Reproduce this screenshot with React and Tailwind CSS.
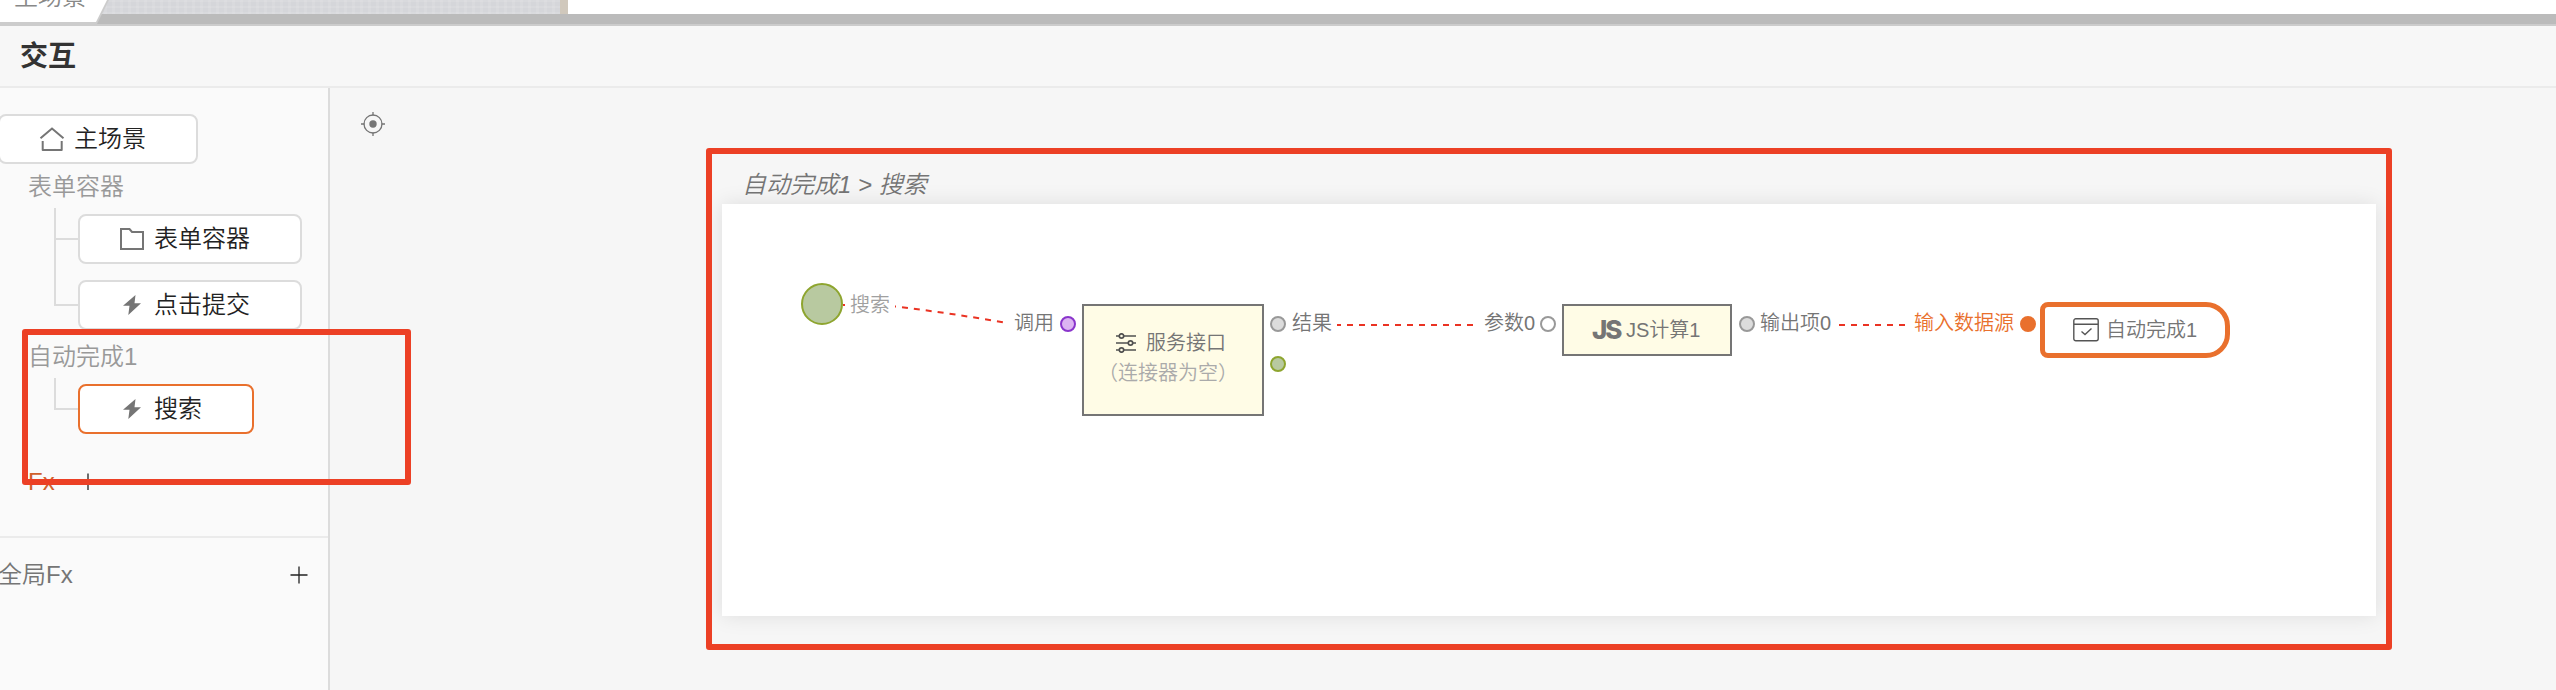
import React from "react";

const PlusIcon = ({ className = "" }) => (
  <svg className={className} width="18" height="18" viewBox="0 0 18 18" fill="none" stroke="currentColor" strokeWidth="1.300">
    <path d="M9 0.500v17M0.500 9h17" />
  </svg>
);

const HomeIcon = () => (
  <svg width="26" height="26" viewBox="0 0 26 26" fill="none" stroke="#757575" strokeWidth="2">
    <path d="M1.500 12.300 13 2.600l11.500 9.700" />
    <path d="M3.700 15v9h19v-9" strokeLinejoin="round" />
  </svg>
);

const FolderIcon = () => (
  <svg width="24" height="22" viewBox="0 0 24 22" fill="none" stroke="#757575" strokeWidth="2">
    <path d="M1 1h8.500l2.500 3h11v17H1z" />
  </svg>
);

const BoltIcon = () => (
  <svg width="18" height="20" viewBox="0 0 18 20" fill="#757575">
    <path d="M12.500 0 0 10.700h6.500L5.300 20 18 8.300h-6.500z" />
  </svg>
);

const TargetIcon = () => (
  <svg width="24" height="24" viewBox="0 0 24 24" fill="none" stroke="#757575" strokeWidth="1.300">
    <circle cx="12" cy="12" r="9" />
    <circle cx="12" cy="12" r="3.700" fill="#757575" stroke="none" />
    <path d="M12 0v3.500M12 20.500V24M0 12h3.500M20.500 12H24" />
  </svg>
);

const SlidersIcon = () => (
  <svg width="20" height="20" viewBox="0 0 20 20" fill="#fffce6" stroke="#505050" strokeWidth="1.700">
    <path d="M0 3h20M0 10h20M0 17h20" />
    <circle cx="5.500" cy="3" r="2.200" />
    <circle cx="14.500" cy="10" r="2.200" />
    <circle cx="5.500" cy="17" r="2.200" />
  </svg>
);

const CheckPanelIcon = () => (
  <svg width="26" height="24" viewBox="0 0 26 24" fill="none" stroke="#555" strokeWidth="1.400">
    <rect x=".8" y=".8" width="24.400" height="22" rx="2" />
    <path d="M1 6.300h24M8.500 13.500l3.500 3 6.500-6" />
  </svg>
);

function TreeItem({ icon, label, className = "", box = "border-[#dcdcdc] w-[224px]" }) {
  return (
    <div className={`flex items-center ${className}`}>
      <div className={`flex h-[50px] items-center rounded-lg border-2 bg-white ${box}`}>
        <span className="ml-10 flex w-6 justify-center">{icon}</span>
        <span className="ml-2.5 text-[#222]">{label}</span>
      </div>
    </div>
  );
}

function Sidebar() {
  return (
    <aside className="flex w-[330px] shrink-0 flex-col border-r-2 border-[#dcdcdc] bg-[#fafafa] text-2xl leading-6">
      <div className="h-[402px] shrink-0 overflow-hidden pt-[26px]">
        <div className="-ml-0.5 flex h-[50px] w-[200px] items-center rounded-lg border-2 border-[#dcdcdc] bg-white">
          <span className="ml-[39px]"><HomeIcon /></span>
          <span className="ml-[9px] text-[#222]">主场景</span>
        </div>
        <div className="mt-[11px] ml-7 text-[#999]">表单容器</div>
        <div className="mt-[9px] ml-[54px] flex h-[122px]">
          <div className="flex h-[98px] w-6 flex-col border-b-2 border-l-2 border-[#dcdcdc]">
            <div className="h-8 border-b-2 border-[#dcdcdc]" />
          </div>
          <div className="flex flex-col gap-4 pt-1.5">
            <TreeItem icon={<FolderIcon />} label="表单容器" />
            <TreeItem icon={<BoltIcon />} label="点击提交" />
          </div>
        </div>
        <div className="mt-[15px] ml-7 text-[#999]">自动完成1</div>
        <div className="mt-[9px] ml-[54px] flex h-14">
          <div className="h-8 w-6 border-b-2 border-l-2 border-[#dcdcdc]" />
          <TreeItem className="pt-1.5" icon={<BoltIcon />} label="搜索" box="w-[176px] border-[#e9702d]" />
        </div>
        <div className="mt-9 ml-7 flex items-center text-[#d0602c]">
          <span className="w-[51px]">Fx</span>
          <PlusIcon className="text-[#222]" />
        </div>
      </div>
      <div className="mt-[46px] flex h-[76px] items-center justify-between border-t-2 border-[#ebebeb] pr-5">
        <span className="-ml-0.5 text-[#757575]">全局Fx</span>
        <PlusIcon className="text-[#222]" />
      </div>
    </aside>
  );
}

function Port({ x, y, className }) {
  return <div className={`absolute size-4 rounded-full border-2 ${className}`} style={{ left: x - 8, top: y - 8 }} />;
}

function Label({ x, children, className = "text-[#757575]", y = 109 }) {
  return <div className={`absolute whitespace-nowrap leading-5 ${className}`} style={{ left: x, top: y }}>{children}</div>;
}

function Diagram() {
  return (
    <div className="relative h-[412px] w-[1654px] bg-white text-xl leading-5 text-[#757575] shadow-[0_0_20px_rgba(0,0,0,0.1)]">
      <svg className="absolute inset-0" width="1654" height="412" fill="none" stroke="#ea3323" strokeWidth="2" strokeDasharray="6 6">
        <path d="M121 101h2" strokeDasharray="none" />
        <path d="M173 102.500h1" strokeDasharray="none" />
        <path d="M180 103.200Q230 109.500 281 118.300" />
        <path d="M615 121h4" strokeDasharray="none" />
        <path d="M625 121h128" />
        <path d="M1117 121h66" />
      </svg>
      <div className="absolute top-[79px] left-[79px] size-[42px] rounded-full border-2 border-[#8ea52f] bg-[#b8c9a0]" />
      <Label x={128} y={91} className="text-[#a0a0a0]">搜索</Label>
      <Label x={292}>调用</Label>
      <Port x={346} y={120} className="border-[#8a35cc] bg-[#dcb4f2]" />
      <div className="absolute top-[100px] left-[360px] h-[112px] w-[182px] border-2 border-[#757575] bg-[#fffce6] pt-[27px]">
        <div className="flex items-center gap-2.5 pl-8">
          <SlidersIcon />
          <span>服务接口</span>
        </div>
        <div className="mt-2.5 -ml-2.5 whitespace-nowrap text-center text-[#aaa]">（连接器为空）</div>
      </div>
      <Port x={556} y={120} className="border-[#999] bg-[#dcdcdc]" />
      <Port x={556} y={160} className="border-[#8ea52f] bg-[#b8c9a0]" />
      <Label x={570}>结果</Label>
      <Label x={762}>参数0</Label>
      <Port x={826} y={120} className="border-[#999] bg-white" />
      <div className="absolute top-[100px] left-[840px] flex h-[52px] w-[170px] items-center border-2 border-[#757575] bg-[#fffce6] pl-7">
        <span className="w-8 text-[26px] leading-5 font-extrabold tracking-[-2px] [font-family:Inter,sans-serif]">JS</span>
        <span className="ml-0.5">JS计算1</span>
      </div>
      <Port x={1024.500} y={120} className="border-[#999] bg-[#dcdcdc]" />
      <Label x={1038}>输出项0</Label>
      <Label x={1192} className="text-[#e9702d]">输入数据源</Label>
      <Port x={1306} y={120} className="border-[#e9702d] bg-[#e9702d]" />
      <div className="absolute top-[98px] left-[1318px] flex h-[56px] w-[190px] items-center gap-[7px] rounded-l-lg rounded-r-3xl border-[5px] border-[#e9702d] bg-white pl-7">
        <CheckPanelIcon />
        <span>自动完成1</span>
      </div>
    </div>
  );
}

export default function App() {
  return (
    <div className="relative flex h-[690px] w-[2556px] flex-col overflow-hidden bg-[#f6f6f6] font-['Liberation_Sans','Noto_Sans_CJK_SC',sans-serif] font-[350]">
      <div className="relative h-[26px] shrink-0 border-b-2 border-[#ccc] bg-[#bbb]">
        <div className="flex h-3.5 bg-white">
          <div className="w-[560px] bg-[#d5d6da] bg-[repeating-linear-gradient(90deg,#ffffff18_0px,#ffffff18_3px,transparent_3px,transparent_8px),repeating-linear-gradient(0deg,#ffffff18_0px,#ffffff18_2px,transparent_2px,transparent_6px)]" />
          <div className="w-2 bg-[#d0c8bc]" />
        </div>
        <svg className="absolute top-0 left-0" width="112" height="24"><path d="M0 0h109L97 24H0z" fill="#ccc" /><path d="M0 0h107L96 22H0z" fill="#fff" /></svg>
        <div className="absolute -top-[15px] left-3.5 text-2xl leading-6 text-[#888]">主场景</div>
      </div>
      <header className="flex h-[62px] shrink-0 items-center border-b-2 border-[#ebebeb] bg-[#f7f7f7] pt-0.5 pl-5 text-[28px] font-bold text-[#333]">交互</header>
      <div className="flex min-h-0 flex-1">
        <Sidebar />
        <main className="flex flex-1 pt-6 pl-[31px]">
          <TargetIcon />
          <section className="ml-[337px] flex flex-col pt-[61px]">
            <h2 className="ml-5 h-[31px] text-2xl leading-6 text-[#757575] italic">自动完成1 &gt; 搜索</h2>
            <Diagram />
          </section>
        </main>
      </div>
      <div className="absolute top-[329px] left-[22px] h-[156px] w-[389px] rounded-[3px] border-[6px] border-[#ec4025]" />
      <div className="absolute top-[148px] left-[706px] h-[502px] w-[1686px] rounded-[3px] border-[6px] border-[#ec4025]" />
    </div>
  );
}
